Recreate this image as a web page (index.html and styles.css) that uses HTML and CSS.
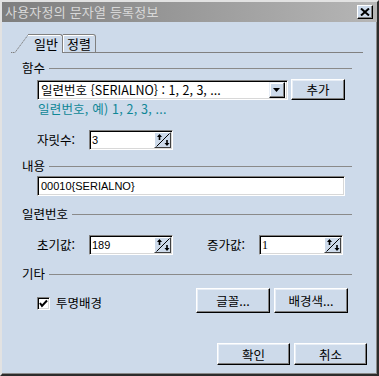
FILE: index.html
```html
<!DOCTYPE html>
<html lang="ko">
<head>
    <meta charset="UTF-8">
    <meta name="viewport" content="width=device-width, initial-scale=1.0">
    <title>사용자정의 문자열 등록정보</title>
    <link rel="stylesheet" href="styles.css">
</head>
<body>
    <div class="window">
        <div class="titlebar">
            <span class="title">사용자정의 문자열 등록정보</span>
            <button class="close">
                <svg width="10" height="8" viewBox="0 0 10 8"><path d="M1 0.5 L9 7.5 M9 0.5 L1 7.5" stroke="#000" stroke-width="2"/></svg>
            </button>
        </div>

        <div class="tabs">
            <svg class="tab-slant" width="17" height="19" viewBox="0 0 17 19"><polyline points="0,18.5 4,18.5 17,1" fill="none" stroke="#808080" stroke-width="1" stroke-dasharray="1.4 0.6"/></svg>
            <div class="tab active">일반</div>
            <div class="tab">정렬</div>
            <div class="tab-rest"></div>
        </div>

        <div class="page">
            <div class="group-head head-func"><span>함수</span><i class="rule"></i></div>
            <div class="row combo-row">
                <div class="combo field">
                    <span class="combo-text">일련번호 {SERIALNO} : 1, 2, 3, ...</span>
                    <span class="drop">
                        <svg width="8" height="4" viewBox="0 0 8 4"><polygon points="0,0 7,0 3.5,4" fill="#000"/></svg>
                    </span>
                </div>
                <button class="btn add">추가</button>
            </div>
            <div class="hint">일련번호, 예) 1, 2, 3, ...</div>
            <div class="row digits-row">
                <span class="label">자릿수:</span>
                <div class="spin field"><span class="val">3</span><span class="spin-btn"><svg width="14" height="14" viewBox="0 0 14 14"><path d="M0.5 13.5 L13.5 0.5" stroke="#000"/><path d="M3.5 2 V7 M11 7 V12" stroke="#000" stroke-width="1.6"/><polygon points="1,4 3.5,1 6,4" fill="#000"/><polygon points="8.5,10 11,13 13.5,10" fill="#000"/></svg></span></div>
            </div>

            <div class="group-head head-content"><span>내용</span><i class="rule"></i></div>
            <div class="row content-row">
                <div class="text-input field">00010{SERIALNO}</div>
            </div>

            <div class="group-head head-serial"><span>일련번호</span><i class="rule"></i></div>
            <div class="row serial-row">
                <span class="label">초기값:</span>
                <div class="spin field"><span class="val">189</span><span class="spin-btn"><svg width="14" height="14" viewBox="0 0 14 14"><path d="M0.5 13.5 L13.5 0.5" stroke="#000"/><path d="M3.5 2 V7 M11 7 V12" stroke="#000" stroke-width="1.6"/><polygon points="1,4 3.5,1 6,4" fill="#000"/><polygon points="8.5,10 11,13 13.5,10" fill="#000"/></svg></span></div>
                <span class="label step">증가값:</span>
                <div class="spin field"><span class="val serif">1</span><span class="spin-btn"><svg width="14" height="14" viewBox="0 0 14 14"><path d="M0.5 13.5 L13.5 0.5" stroke="#000"/><path d="M3.5 2 V7 M11 7 V12" stroke="#000" stroke-width="1.6"/><polygon points="1,4 3.5,1 6,4" fill="#000"/><polygon points="8.5,10 11,13 13.5,10" fill="#000"/></svg></span></div>
            </div>

            <div class="group-head head-etc"><span>기타</span><i class="rule"></i></div>
            <div class="row etc-row">
                <label class="check">
                    <span class="box"><svg width="9" height="9" viewBox="0 0 9 9"><polyline points="1,4 3,7 8,1.5" fill="none" stroke="#000" stroke-width="2"/></svg></span>
                    투명배경
                </label>
                <div class="etc-buttons">
                    <button class="btn wide">글꼴...</button>
                    <button class="btn wide">배경색...</button>
                </div>
            </div>
        </div>

        <div class="footer">
            <button class="btn dlg">확인</button>
            <button class="btn dlg">취소</button>
        </div>
    </div>
</body>
</html>
```

FILE: styles.css
```css
* {
    margin: 0;
    padding: 0;
    box-sizing: border-box;
}
body {
    width: 379px;
    height: 376px;
    overflow: hidden;
    font-family: "Noto Sans CJK KR", sans-serif;
    font-size: 12px;
    line-height: 14px;
    color: #000;
}
.window {
    width: 379px;
    height: 376px;
    background: #cddaea;
    border: 2px solid;
    border-color: #e2e2e2 #2c2c2c #2c2c2c #e2e2e2;
    box-shadow: inset -1px -1px #8a8a8a;
    display: flex;
    flex-direction: column;
}

/* title bar */
.titlebar {
    height: 20px;
    display: flex;
    align-items: center;
    justify-content: space-between;
    padding: 0 4px 0 3px;
    background: linear-gradient(to right, #7e7e7e, #b6b6b6);
}
.title {
    color: #d8d8d8;
    font-size: 13px;
    letter-spacing: 0.2px;
}
.close {
    width: 16px;
    height: 14px;
    display: flex;
    align-items: center;
    justify-content: center;
    background: #cddaea;
    border: 1px solid;
    border-color: #fff #000 #000 #fff;
    box-shadow: inset -1px -1px #808080;
}

/* tabs */
.tabs {
    display: flex;
    align-items: flex-end;
    height: 19px;
    margin: 12px 14px 0 9px;
}
.tab-slant { display: block; }
.tab {
    height: 19px;
    padding-top: 2px;
    border: 1px solid #808080;
    border-radius: 0 3px 0 0;
    font-size: 13px;
    text-align: center;
}
.tab.active {
    width: 35px;
    border-left: none;
    border-bottom: none;
    box-shadow: inset 0 1px #fff;
    padding-left: 6px;
    text-align: left;
}
.tab:not(.active) {
    width: 33px;
    height: 19px;
    border-left: none;
    box-shadow: inset 1px 1px #fff;
}
.tab-rest {
    flex: 1;
    border-bottom: 1px solid #808080;
}

/* page */
.page {
    padding: 0 25px 0 18px;
}
.group-head {
    display: flex;
    align-items: center;
    gap: 4px;
    height: 14px;
    padding-left: 2px;
    font-size: 12.5px;
}
.rule {
    flex: 1;
    border-top: 1px solid #8a8a8a;
}
.head-func { margin-top: 8px; }
.head-content { margin-top: 9px; }
.head-serial { margin-top: 11px; }
.head-etc { margin-top: 12px; }

.row {
    display: flex;
    align-items: center;
    padding-left: 17px;
}
.field {
    background: #fff;
    border: 1px solid;
    border-color: #808080 #fff #fff #808080;
    box-shadow: inset 1px 1px #000, inset -1px -1px #d8d8d8;
}
.btn {
    font-family: "Noto Sans CJK KR", sans-serif;
    font-size: 12.5px;
    color: #000;
    background: #cddaea;
    border: 1px solid;
    border-color: #fff #000 #000 #fff;
    box-shadow: inset -1px -1px #808080, inset 1px 1px #e8eef6;
}

.combo-row {
    margin-top: 4px;
    gap: 3px;
}
.combo {
    width: 251px;
    height: 20px;
    display: flex;
    align-items: center;
    padding: 0 2px 0 3px;
}
.combo-text {
    flex: 1;
    font-size: 12.5px;
    white-space: nowrap;
}
.drop {
    width: 16px;
    height: 16px;
    display: flex;
    align-items: center;
    justify-content: center;
    background: #cddaea;
    border: 1px solid;
    border-color: #e8eef6 #000 #000 #e8eef6;
    box-shadow: inset -1px -1px #808080, inset 1px 1px #fff;
}
.add {
    width: 54px;
    height: 21px;
}
.hint {
    margin-top: 2px;
    padding-left: 18px;
    color: #0f8796;
    font-size: 12.5px;
    letter-spacing: 0.2px;
}

.label {
    width: 52px;
    font-size: 12.5px;
}
.label.step { margin-left: 34px; }
.digits-row { margin-top: 14px; }
.serial-row { margin-top: 14px; }
.spin {
    width: 84px;
    height: 20px;
    display: flex;
    align-items: center;
    padding: 0 1px 0 2px;
}
.val {
    flex: 1;
    font-family: "Liberation Sans", sans-serif;
    font-size: 11px;
}
.val.serif {
    font-family: "Liberation Serif", serif;
    font-size: 12px;
}
.spin-btn {
    width: 17px;
    height: 16px;
    display: flex;
    align-items: center;
    justify-content: center;
    background: #cddaea;
    border: 1px solid;
    border-color: #fff #404040 #404040 #fff;
}

.content-row { margin-top: 3px; }
.text-input {
    width: 308px;
    height: 20px;
    padding: 2px 0 0 3px;
    font-family: "Liberation Sans", sans-serif;
    font-size: 11px;
}

.etc-row {
    margin-top: 7px;
    justify-content: space-between;
    padding-right: 4px;
}
.check {
    display: flex;
    align-items: center;
    gap: 6px;
    margin-top: 5px;
    font-size: 12.5px;
}
.box {
    width: 13px;
    height: 13px;
    display: flex;
    align-items: center;
    justify-content: center;
    background: #fff;
    border: 1px solid;
    border-color: #808080 #fff #fff #808080;
    box-shadow: inset 1px 1px #000, inset -1px -1px #d8d8d8;
}
.etc-buttons {
    display: flex;
    gap: 4px;
}
.wide {
    width: 74px;
    height: 25px;
}

.footer {
    margin-top: auto;
    margin-bottom: 9px;
    padding-right: 10px;
    display: flex;
    justify-content: flex-end;
    gap: 4px;
}
.dlg {
    width: 73px;
    height: 22px;
}
```
